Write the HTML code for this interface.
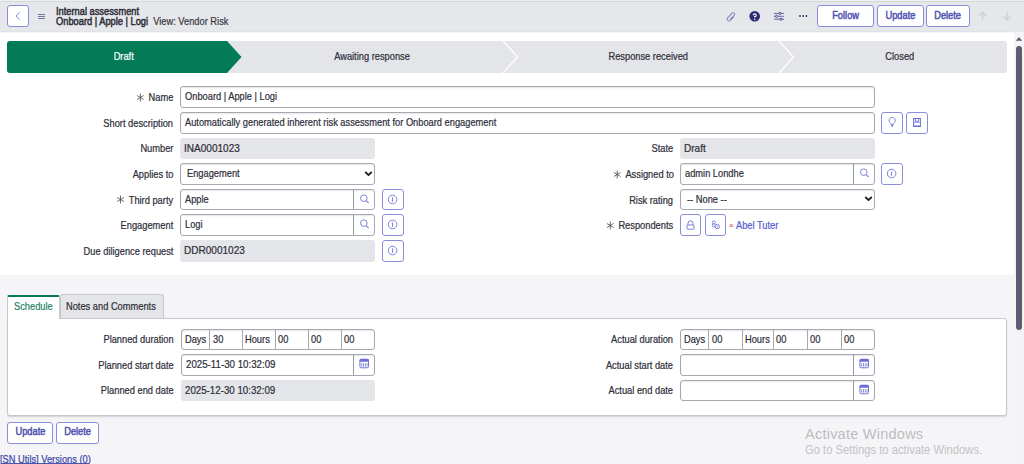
<!DOCTYPE html>
<html><head><meta charset="utf-8"><style>
*{box-sizing:border-box;margin:0;padding:0}
html,body{width:1024px;height:464px;overflow:hidden;background:#f5f5f7;font-family:"Liberation Sans",sans-serif;color:#2e2e3a;font-size:10.8px;letter-spacing:0;-webkit-text-stroke-width:0.22px}
.t{display:inline-block;transform:scaleX(.86);transform-origin:0 50%}
.tr{display:inline-block;transform:scaleX(.86);transform-origin:100% 50%}
.tc{display:inline-block;transform:scaleX(.86);transform-origin:50% 50%}
.a{position:absolute;white-space:nowrap}
.ib{position:absolute;background:#fff;border:1px solid #8a8ed9;border-radius:3px}
.tb{position:absolute;background:#fff;border:1px solid #8a8ed9;border-radius:3px;color:#4d52b0;font-size:10.8px;text-align:center;-webkit-text-stroke:0.5px #4d52b0}
.lb{position:absolute;text-align:right;white-space:nowrap;color:#2e2e3a}
.in{position:absolute;background:#fff;border:1px solid #a6a9b1;border-radius:3px;box-shadow:inset 0 1px 1.5px rgba(0,0,0,.10);padding-left:4px;white-space:nowrap;overflow:hidden}
.ro{position:absolute;background:#e4e5e8;border-radius:3px;padding-left:4px;white-space:nowrap}
.sb{position:absolute;top:0;right:0;width:21px;bottom:0;border-left:1px solid #969aa2}
.sg{position:absolute;top:40px;height:32px;line-height:32px;text-align:center;color:#2e2e3a}
</style></head>
<body>
<div class="a" style="left:0;top:0;width:1024px;height:32px;background:#e6e7ea"></div>
<div class="a" style="left:0;top:0;width:1024px;height:1px;background:#eef0ef"></div>
<div class="a" style="left:0;top:1px;width:1024px;height:1px;background:#d7d8db"></div>
<div class="ib" style="left:7px;top:5px;width:22px;height:22px"></div>
<svg class="a" style="left:7px;top:5px" width="22" height="22" viewBox="0 0 22 22"><path d="M12.6 7.3L9 11L12.6 14.7" fill="none" stroke="#9093da" stroke-width="1"/></svg>
<svg class="a" style="left:37px;top:13px" width="10" height="8" viewBox="0 0 10 8"><path d="M1 1.5H8M1 3.5H8M1 5.5H8" stroke="#5e6192" stroke-width="0.85"/></svg>
<div class="a" style="left:55.5px;top:5.5px;font-size:10.8px;line-height:11px;-webkit-text-stroke:0.5px #2e2e3a;transform:scaleX(.86);transform-origin:0 50%">Internal assessment</div>
<div class="a" style="left:55.5px;top:16px;font-size:10.8px;line-height:11px;transform:scaleX(.86);transform-origin:0 50%"><span style="-webkit-text-stroke:0.5px #2e2e3a">Onboard | Apple | Logi</span>&nbsp;&nbsp;<span style="color:#383846">View: Vendor Risk</span></div>
<svg class="a" style="left:723.5px;top:10px" width="14" height="14" viewBox="0 0 14 14"><g transform="rotate(45 7 7)"><path d="M8.9 5V9.7A1.9 1.9 0 0 1 5.1 9.7V3.5A1.5 1.5 0 0 1 8.1 3.5V9.2" fill="none" stroke="#7a7eb8" stroke-width="0.95"/></g></svg>
<svg class="a" style="left:749px;top:11px" width="12" height="11" viewBox="0 0 12 11"><circle cx="5.7" cy="5.3" r="5.3" fill="#2a2c78"/><path d="M4.2 4.2A1.5 1.45 0 1 1 5.7 5.7V6.5" fill="none" stroke="#fff" stroke-width="1.2"/><circle cx="5.7" cy="8.3" r="0.75" fill="#fff"/></svg>
<svg class="a" style="left:773px;top:11px" width="12" height="11" viewBox="0 0 12 11"><path d="M1 2.4H11M1 5.3H11M1 8.2H11" stroke="#5a5ea2" stroke-width="0.9"/><circle cx="7" cy="2.4" r="1.1" fill="#e6e7ea" stroke="#3e4290" stroke-width="0.9"/><circle cx="3.6" cy="5.3" r="1.1" fill="#e6e7ea" stroke="#3e4290" stroke-width="0.9"/><circle cx="8" cy="8.2" r="1.1" fill="#e6e7ea" stroke="#3e4290" stroke-width="0.9"/></svg>
<svg class="a" style="left:798px;top:14px" width="11" height="4" viewBox="0 0 11 4"><circle cx="2" cy="2" r="0.9" fill="#2e3270"/><circle cx="5.2" cy="2" r="0.9" fill="#2e3270"/><circle cx="8.4" cy="2" r="0.9" fill="#2e3270"/></svg>
<div class="tb" style="left:817px;top:5px;width:57px;height:22px;line-height:18px"><span class="tc">Follow</span></div>
<div class="tb" style="left:877px;top:5px;width:47px;height:22px;line-height:18px"><span class="tc">Update</span></div>
<div class="tb" style="left:926px;top:5px;width:43.5px;height:22px;line-height:18px"><span class="tc">Delete</span></div>
<svg class="a" style="left:977px;top:9px" width="11" height="13" viewBox="0 0 11 13"><path d="M5.6 11V3.2M1.8 6.8L5.6 3.2L9.4 6.8" fill="none" stroke="#c8cad4" stroke-width="1.1"/></svg>
<svg class="a" style="left:1001px;top:9px" width="11" height="13" viewBox="0 0 11 13"><path d="M6 3V10.8M2.2 7.2L6 10.8L9.8 7.2" fill="none" stroke="#c8cad4" stroke-width="1.1"/></svg>
<div class="a" style="left:0;top:32px;width:1014px;height:243px;background:#fff"></div>
<div class="a" style="left:0;top:31px;width:1014px;height:1px;background:#e1e2e5"></div>
<div class="a" style="left:0;top:32px;width:1014px;height:1px;background:#f6f7f7"></div>
<div class="a" style="left:1014px;top:32px;width:10px;height:432px;background:#f4f4f6"></div>
<svg class="a" style="left:1015px;top:36px" width="8" height="5" viewBox="0 0 8 5"><path d="M0.8 4.7L3.9 1L7.2 4.7Z" fill="#5e5c70"/></svg>
<div class="a" style="left:1016px;top:46px;width:6px;height:284px;background:#5e5c70;border-radius:3px"></div>
<svg class="a" style="left:7px;top:41px" width="1000" height="32" viewBox="0 0 1000 32"><rect x="0" y="0" width="1000" height="32" rx="3" fill="#e4e5e8"/><path d="M3 0H220L234.5 16L220 32H3A3 3 0 0 1 0 29V3A3 3 0 0 1 3 0Z" fill="#037b57"/><path d="M496 0L510.5 16L496 32" fill="none" stroke="#fff" stroke-width="1.2"/><path d="M772 0L786.5 16L772 32" fill="none" stroke="#fff" stroke-width="1.2"/></svg>
<div class="sg" style="left:7px;width:234px;color:#fff"><span class="tc">Draft</span></div>
<div class="sg" style="left:262px;width:220px"><span class="tc">Awaiting response</span></div>
<div class="sg" style="left:538px;width:220px"><span class="tc">Response received</span></div>
<div class="sg" style="left:800px;width:200px"><span class="tc">Closed</span></div>
<div class="lb" style="right:850.5px;top:87.2px;line-height:21.6px;transform:scaleX(0.86);transform-origin:100% 50%"><svg width="10" height="9" viewBox="0 0 9 9" preserveAspectRatio="none" style="vertical-align:-0.5px;margin-right:4.5px"><path d="M4.5 0.5V8.5M1 2.5L8 6.5M1 6.5L8 2.5" stroke="#4a4a56" stroke-width="0.85"/></svg>Name</div>
<div class="in" style="left:180px;top:86.4px;width:695px;height:21.6px;line-height:19.6px"><span class="t" style="transform:scaleX(0.86)">Onboard | Apple | Logi</span></div>
<div class="lb" style="right:850.5px;top:112.8px;line-height:21.6px;transform:scaleX(0.86);transform-origin:100% 50%">Short description</div>
<div class="in" style="left:180px;top:112px;width:695px;height:21.6px;line-height:19.6px"><span class="t" style="transform:scaleX(0.86)">Automatically generated inherent risk assessment for Onboard engagement</span></div>
<div class="ib" style="left:881px;top:112px;width:22px;height:21.6px"></div>
<svg class="a" style="left:881px;top:112px" width="22" height="21.6" viewBox="0 0 22 21.6"><path d="M9.8 11.3A3.1 3.1 0 1 1 12.6 11.3L11.5 14.2H10.9Z" fill="none" stroke="#8286d8" stroke-width="1"/><path d="M11.2 11.8V14.6" stroke="#6b6fd2" stroke-width="0.9"/></svg>
<div class="ib" style="left:906px;top:112px;width:22px;height:21.6px"></div>
<svg class="a" style="left:906px;top:112px" width="22" height="21.6" viewBox="0 0 22 21.6"><rect x="7.6" y="6.5" width="6.8" height="8" fill="none" stroke="#6b6fd2" stroke-width="1"/><rect x="9.4" y="6.5" width="3.2" height="2.8" fill="none" stroke="#6b6fd2" stroke-width="0.9"/><path d="M8 10.4H14M8 13.6H14" stroke="#9a9de0" stroke-width="0.9"/></svg>
<div class="lb" style="right:850.5px;top:138.4px;line-height:21.6px;transform:scaleX(0.86);transform-origin:100% 50%">Number</div>
<div class="ro" style="left:180px;top:137.6px;width:195px;height:21.6px;line-height:21.6px"><span class="t" style="transform:scaleX(0.93)">INA0001023</span></div>
<div class="lb" style="right:850.5px;top:164.0px;line-height:21.6px;transform:scaleX(0.86);transform-origin:100% 50%">Applies to</div>
<div class="in" style="left:180px;top:163.2px;width:195px;height:21.6px;line-height:19.6px;padding-left:6px"><span class="t">Engagement</span></div>
<svg class="a" style="left:364px;top:169.5px" width="9" height="7" viewBox="0 0 9 7"><path d="M1.2 2L4.5 5L7.8 2" fill="none" stroke="#1e1e24" stroke-width="1.7"/></svg>
<div class="lb" style="right:850.5px;top:189.60000000000002px;line-height:21.6px;transform:scaleX(0.86);transform-origin:100% 50%"><svg width="10" height="9" viewBox="0 0 9 9" preserveAspectRatio="none" style="vertical-align:-0.5px;margin-right:4.5px"><path d="M4.5 0.5V8.5M1 2.5L8 6.5M1 6.5L8 2.5" stroke="#4a4a56" stroke-width="0.85"/></svg>Third party</div>
<div class="in" style="left:180px;top:188.8px;width:195px;height:21.6px;line-height:19.6px"><span class="t" style="transform:scaleX(0.86)">Apple</span><div class="sb"></div></div>
<svg class="a" style="left:353px;top:188.8px" width="22" height="21.6" viewBox="0 0 22 21.6"><circle cx="10.8" cy="9.200000000000001" r="3.3" fill="none" stroke="#8084d8" stroke-width="1"/><path d="M13.2 11.600000000000001L15.6 14.0" stroke="#8084d8" stroke-width="1.1"/></svg>
<div class="ib" style="left:381.5px;top:188.8px;width:22px;height:21.6px"></div>
<svg class="a" style="left:381.5px;top:188.8px" width="22" height="21.6" viewBox="0 0 22 21.6"><circle cx="10.6" cy="10.5" r="4.3" fill="none" stroke="#8084d8" stroke-width="1"/><path d="M10.6 8.5V12.8" stroke="#7478d4" stroke-width="1"/></svg>
<div class="lb" style="right:850.5px;top:215.20000000000002px;line-height:21.6px;transform:scaleX(0.86);transform-origin:100% 50%">Engagement</div>
<div class="in" style="left:180px;top:214.4px;width:195px;height:21.6px;line-height:19.6px"><span class="t" style="transform:scaleX(0.86)">Logi</span><div class="sb"></div></div>
<svg class="a" style="left:353px;top:214.4px" width="22" height="21.6" viewBox="0 0 22 21.6"><circle cx="10.8" cy="9.200000000000001" r="3.3" fill="none" stroke="#8084d8" stroke-width="1"/><path d="M13.2 11.600000000000001L15.6 14.0" stroke="#8084d8" stroke-width="1.1"/></svg>
<div class="ib" style="left:381.5px;top:214.4px;width:22px;height:21.6px"></div>
<svg class="a" style="left:381.5px;top:214.4px" width="22" height="21.6" viewBox="0 0 22 21.6"><circle cx="10.6" cy="10.5" r="4.3" fill="none" stroke="#8084d8" stroke-width="1"/><path d="M10.6 8.5V12.8" stroke="#7478d4" stroke-width="1"/></svg>
<div class="lb" style="right:850.5px;top:240.8px;line-height:21.6px;transform:scaleX(0.86);transform-origin:100% 50%">Due diligence request</div>
<div class="ro" style="left:180px;top:240px;width:195px;height:21.6px;line-height:21.6px"><span class="t" style="transform:scaleX(0.93)">DDR0001023</span></div>
<div class="ib" style="left:381.5px;top:240px;width:22px;height:21.6px"></div>
<svg class="a" style="left:381.5px;top:240px" width="22" height="21.6" viewBox="0 0 22 21.6"><circle cx="10.6" cy="10.5" r="4.3" fill="none" stroke="#8084d8" stroke-width="1"/><path d="M10.6 8.5V12.8" stroke="#7478d4" stroke-width="1"/></svg>
<div class="lb" style="right:350.5px;top:138.4px;line-height:21.6px;transform:scaleX(0.86);transform-origin:100% 50%">State</div>
<div class="ro" style="left:680px;top:137.6px;width:194.5px;height:21.6px;line-height:21.6px"><span class="t" style="transform:scaleX(0.93)">Draft</span></div>
<div class="lb" style="right:350.5px;top:164.0px;line-height:21.6px;transform:scaleX(0.86);transform-origin:100% 50%"><svg width="10" height="9" viewBox="0 0 9 9" preserveAspectRatio="none" style="vertical-align:-0.5px;margin-right:4.5px"><path d="M4.5 0.5V8.5M1 2.5L8 6.5M1 6.5L8 2.5" stroke="#4a4a56" stroke-width="0.85"/></svg>Assigned to</div>
<div class="in" style="left:680px;top:163.2px;width:194.5px;height:21.6px;line-height:19.6px"><span class="t" style="transform:scaleX(0.86)">admin Londhe</span><div class="sb"></div></div>
<svg class="a" style="left:852.5px;top:163.2px" width="22" height="21.6" viewBox="0 0 22 21.6"><circle cx="10.8" cy="9.200000000000001" r="3.3" fill="none" stroke="#8084d8" stroke-width="1"/><path d="M13.2 11.600000000000001L15.6 14.0" stroke="#8084d8" stroke-width="1.1"/></svg>
<div class="ib" style="left:881px;top:163.2px;width:22px;height:21.6px"></div>
<svg class="a" style="left:881px;top:163.2px" width="22" height="21.6" viewBox="0 0 22 21.6"><circle cx="10.6" cy="10.5" r="4.3" fill="none" stroke="#8084d8" stroke-width="1"/><path d="M10.6 8.5V12.8" stroke="#7478d4" stroke-width="1"/></svg>
<div class="lb" style="right:350.5px;top:189.60000000000002px;line-height:21.6px;transform:scaleX(0.86);transform-origin:100% 50%">Risk rating</div>
<div class="in" style="left:680px;top:188.8px;width:194.5px;height:21.6px;line-height:19.6px;padding-left:6px"><span class="t">-- None --</span></div>
<svg class="a" style="left:863.5px;top:195.10000000000002px" width="9" height="7" viewBox="0 0 9 7"><path d="M1.2 2L4.5 5L7.8 2" fill="none" stroke="#1e1e24" stroke-width="1.7"/></svg>
<div class="lb" style="right:350.5px;top:215.20000000000002px;line-height:21.6px;transform:scaleX(0.86);transform-origin:100% 50%"><svg width="10" height="9" viewBox="0 0 9 9" preserveAspectRatio="none" style="vertical-align:-0.5px;margin-right:4.5px"><path d="M4.5 0.5V8.5M1 2.5L8 6.5M1 6.5L8 2.5" stroke="#4a4a56" stroke-width="0.85"/></svg>Respondents</div>
<div class="ib" style="left:680px;top:214.4px;width:21.2px;height:21.6px"></div>
<svg class="a" style="left:680px;top:214.4px" width="21.2" height="21.6" viewBox="0 0 21.2 21.6"><path d="M8 11V9.3A2.5 2.5 0 0 1 13 9.3V11" fill="none" stroke="#7a7ed8" stroke-width="1"/><rect x="7" y="11" width="7" height="4.2" rx="0.6" fill="none" stroke="#7a7ed8" stroke-width="1"/></svg>
<div class="ib" style="left:704.5px;top:214.4px;width:21.5px;height:21.6px"></div>
<svg class="a" style="left:704.5px;top:214.4px" width="21.5" height="21.6" viewBox="0 0 21.5 21.6"><circle cx="8.8" cy="8.3" r="1.5" fill="none" stroke="#7a7ed8" stroke-width="0.95"/><circle cx="8.8" cy="11.4" r="1.6" fill="none" stroke="#7a7ed8" stroke-width="0.95"/><circle cx="12.3" cy="12.6" r="2.2" fill="#fff" stroke="#7a7ed8" stroke-width="0.95"/><path d="M12.3 11.6V13.6" stroke="#7a7ed8" stroke-width="0.9"/></svg>
<div class="a" style="left:729px;top:215.4px;line-height:21.6px;font-size:8px;color:#e26a78">&#215;</div>
<div class="a" style="left:736px;top:215.4px;line-height:21.6px;color:#565cd0"><span class="t">Abel Tuter</span></div>
<div class="a" style="left:59.5px;top:294.3px;width:104px;height:24px;background:#e4e5e8;border:1px solid #c6c8ce;border-bottom:none;border-radius:3px 3px 0 0"></div>
<div class="a" style="left:7px;top:317.6px;width:1000px;height:98.3px;background:#fff;border:1px solid #c6c8ce;border-radius:0 3px 3px 3px;box-shadow:0 1px 1.5px rgba(0,0,0,.14)"></div>
<div class="a" style="left:7px;top:294.5px;width:52.5px;height:24px;background:#fff;border:1px solid #c6c8ce;border-top:2.5px solid #037b57;border-bottom:none;border-radius:2px 2px 0 0"></div>
<div class="a" style="left:13.5px;top:295.5px;line-height:20px;color:#26846a"><span class="t">Schedule</span></div>
<div class="a" style="left:66px;top:295.5px;line-height:21px"><span class="t">Notes and Comments</span></div>
<div class="lb" style="right:850.5px;top:329.40000000000003px;line-height:21.6px;transform:scaleX(0.86);transform-origin:100% 50%">Planned duration</div>
<div class="lb" style="right:850.5px;top:355.0px;line-height:21.6px;transform:scaleX(0.86);transform-origin:100% 50%">Planned start date</div>
<div class="in" style="left:181px;top:354.2px;width:194px;height:21.6px;line-height:19.6px"><span class="t" style="transform:scaleX(0.9)">2025-11-30 10:32:09</span><div class="sb"></div></div>
<svg class="a" style="left:353px;top:354.2px" width="22" height="21.6" viewBox="0 0 22 21.6"><rect x="6.9" y="5.200000000000001" width="8.6" height="8.6" rx="1.3" fill="none" stroke="#7074d4" stroke-width="1"/><rect x="6.6" y="4.9" width="9.2" height="2.8" rx="1" fill="#6b6fd2"/><path d="M8.7 9.200000000000001V12.600000000000001M10.5 9.200000000000001V12.600000000000001M12.3 9.200000000000001V12.600000000000001M14.0 9.200000000000001V12.600000000000001" stroke="#8c90dc" stroke-width="1"/></svg>
<div class="lb" style="right:850.5px;top:380.40000000000003px;line-height:21.6px;transform:scaleX(0.86);transform-origin:100% 50%">Planned end date</div>
<div class="ro" style="left:181px;top:379.6px;width:194px;height:21.6px;line-height:21.6px"><span class="t" style="transform:scaleX(0.9)">2025-12-30 10:32:09</span></div>
<div class="lb" style="right:350.5px;top:329.40000000000003px;line-height:21.6px;transform:scaleX(0.86);transform-origin:100% 50%">Actual duration</div>
<div class="lb" style="right:350.5px;top:355.0px;line-height:21.6px;transform:scaleX(0.86);transform-origin:100% 50%">Actual start date</div>
<div class="in" style="left:680px;top:354.2px;width:194.5px;height:21.6px;line-height:19.6px"><div class="sb"></div></div>
<svg class="a" style="left:852.5px;top:354.2px" width="22" height="21.6" viewBox="0 0 22 21.6"><rect x="6.9" y="5.200000000000001" width="8.6" height="8.6" rx="1.3" fill="none" stroke="#7074d4" stroke-width="1"/><rect x="6.6" y="4.9" width="9.2" height="2.8" rx="1" fill="#6b6fd2"/><path d="M8.7 9.200000000000001V12.600000000000001M10.5 9.200000000000001V12.600000000000001M12.3 9.200000000000001V12.600000000000001M14.0 9.200000000000001V12.600000000000001" stroke="#8c90dc" stroke-width="1"/></svg>
<div class="lb" style="right:350.5px;top:380.40000000000003px;line-height:21.6px;transform:scaleX(0.86);transform-origin:100% 50%">Actual end date</div>
<div class="in" style="left:680px;top:379.6px;width:194.5px;height:21.6px;line-height:19.6px"><div class="sb"></div></div>
<svg class="a" style="left:852.5px;top:379.6px" width="22" height="21.6" viewBox="0 0 22 21.6"><rect x="6.9" y="5.200000000000001" width="8.6" height="8.6" rx="1.3" fill="none" stroke="#7074d4" stroke-width="1"/><rect x="6.6" y="4.9" width="9.2" height="2.8" rx="1" fill="#6b6fd2"/><path d="M8.7 9.200000000000001V12.600000000000001M10.5 9.200000000000001V12.600000000000001M12.3 9.200000000000001V12.600000000000001M14.0 9.200000000000001V12.600000000000001" stroke="#8c90dc" stroke-width="1"/></svg>
<div class="in" style="left:181px;top:328.6px;width:194px;height:21px;padding:0"></div>
<div class="a" style="left:208.5px;top:329.6px;width:1px;height:19px;background:#a6a9b1"></div>
<div class="a" style="left:242px;top:329.6px;width:1px;height:19px;background:#a6a9b1"></div>
<div class="a" style="left:274.5px;top:329.6px;width:1px;height:19px;background:#a6a9b1"></div>
<div class="a" style="left:307.5px;top:329.6px;width:1px;height:19px;background:#a6a9b1"></div>
<div class="a" style="left:341px;top:329.6px;width:1px;height:19px;background:#a6a9b1"></div>
<div class="a" style="left:185px;top:328.6px;line-height:21px"><span class="t">Days</span></div>
<div class="a" style="left:212.5px;top:328.6px;line-height:21px"><span class="t">30</span></div>
<div class="a" style="left:245px;top:328.6px;line-height:21px"><span class="t">Hours</span></div>
<div class="a" style="left:277.5px;top:328.6px;line-height:21px"><span class="t">00</span></div>
<div class="a" style="left:310.5px;top:328.6px;line-height:21px"><span class="t">00</span></div>
<div class="a" style="left:344px;top:328.6px;line-height:21px"><span class="t">00</span></div>
<div class="in" style="left:680px;top:328.6px;width:194.5px;height:21px;padding:0"></div>
<div class="a" style="left:708px;top:329.6px;width:1px;height:19px;background:#a6a9b1"></div>
<div class="a" style="left:742px;top:329.6px;width:1px;height:19px;background:#a6a9b1"></div>
<div class="a" style="left:773px;top:329.6px;width:1px;height:19px;background:#a6a9b1"></div>
<div class="a" style="left:807px;top:329.6px;width:1px;height:19px;background:#a6a9b1"></div>
<div class="a" style="left:841px;top:329.6px;width:1px;height:19px;background:#a6a9b1"></div>
<div class="a" style="left:684px;top:328.6px;line-height:21px"><span class="t">Days</span></div>
<div class="a" style="left:712px;top:328.6px;line-height:21px"><span class="t">00</span></div>
<div class="a" style="left:745px;top:328.6px;line-height:21px"><span class="t">Hours</span></div>
<div class="a" style="left:776px;top:328.6px;line-height:21px"><span class="t">00</span></div>
<div class="a" style="left:810px;top:328.6px;line-height:21px"><span class="t">00</span></div>
<div class="a" style="left:844px;top:328.6px;line-height:21px"><span class="t">00</span></div>
<div class="tb" style="left:7px;top:422.2px;width:46px;height:21.5px;line-height:17.5px"><span class="tc">Update</span></div>
<div class="tb" style="left:56px;top:422.2px;width:43px;height:21.5px;line-height:17.5px"><span class="tc">Delete</span></div>
<div class="a" style="left:1px;top:463px;width:88px;height:1px;background:#4a56b0"></div>
<div class="a" style="left:0px;top:452.5px;line-height:12px;color:#3b47a8;transform:scaleX(.86);transform-origin:0 50%">[SN Utils] Versions (0)</div>
<div class="a" style="left:805px;top:425.5px;font-size:14.6px;line-height:16px;letter-spacing:0.2px;color:#bdbdc1;-webkit-text-stroke-width:0">Activate Windows</div>
<div class="a" style="left:805px;top:442.5px;font-size:12px;line-height:14px;letter-spacing:0;color:#c2c2c6;-webkit-text-stroke-width:0;transform:scaleX(.935);transform-origin:0 50%">Go to Settings to activate Windows.</div>
</body></html>
